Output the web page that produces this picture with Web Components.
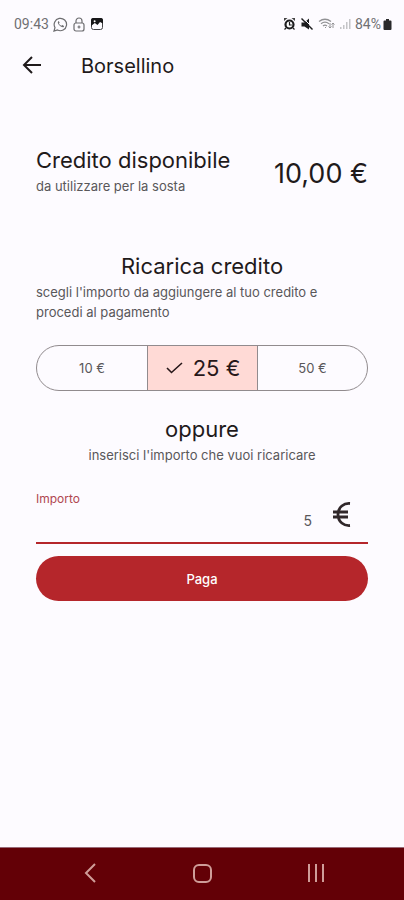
<!DOCTYPE html>
<html lang="it">
<head>
<meta charset="utf-8">
<meta name="viewport" content="width=device-width, initial-scale=1">
<title>Borsellino</title>
<style>
html, body { margin: 0; height: 100%; background: #fdfbff; }
body { font-family: Inter, "Open Sans", sans-serif; color: #1f1a1b; }
</style>
</head>
<body>
<wallet-screen></wallet-screen>
<script>
const define = (name, html, setup) => {
  const tpl = document.createElement('template');
  tpl.innerHTML = html;
  customElements.define(name, class extends HTMLElement {
    constructor() {
      super();
      this.attachShadow({ mode: 'open' }).append(tpl.content.cloneNode(true));
      if (setup) setup(this.shadowRoot);
    }
  });
};

define('status-bar', `
<style>
:host { display: flex; align-items: center; justify-content: space-between; height: 48px; padding: 0 12px 0 14px; font: 14px/16px Roboto, sans-serif; color: #707073; }
div { display: flex; align-items: center; gap: 4px; }
.battery { gap: 2px; }
svg { display: block; }
</style>
<div>
  <span>09:43</span>
  <svg width="15" height="15" viewBox="0 0 15 15" fill="none" stroke="#6d6d70" stroke-width="1.2"><path d="M1 14l1-3.4A6.2 6.2 0 1 1 4.500 13z"/><path d="M5.200 4.300c-1 1 0 3 1.400 4.300s3.300 2.400 4.200 1.300l.2-.9-1.700-1-.9.800C7 8.300 6.200 7.300 5.900 6.600l.7-.9-.7-1.500z" fill="#6d6d70" stroke="none"/></svg>
  <svg width="14" height="15" viewBox="-1 0 14 15" fill="none" stroke="#6d6d70" stroke-width="1.2"><rect x="1" y="6" width="10" height="8" rx="2"/><path d="M3 6V4a3 3 0 0 1 6 0v2M6 8.500v3M4.500 10h3"/></svg>
  <svg width="14" height="14" viewBox="0 0 14 14"><rect x="1.500" y="1.500" width="11" height="11" rx="2" fill="none" stroke="#444447"/><path d="M1 3q0-2 2-2h8q2 0 2 2v3.500L10 5 7.500 8 4.800 6 1 9z" fill="#171719"/><circle cx="4.600" cy="4.200" r="1" fill="#fff"/></svg>
</div>
<div>
  <svg width="13" height="14" viewBox="0 0 13 14"><path d="M1 1h3.500L1 4zM12 1H8.500L12 4z" fill="#444"/><circle cx="6.500" cy="7.500" r="4" fill="#fff" stroke="#1d1d1f" stroke-width="2.200"/><path d="M6.500 5v3h2.300M3 11l-1.500 1.500M10 11l1.500 1.500" fill="none" stroke="#1d1d1f" stroke-width="1.200"/></svg>
  <svg width="14" height="14" viewBox="0 0 14 14"><path d="M1.500 5.500h3L9 1.500V12.500L4.500 9.500h-3z" fill="#1d1d1f"/><path d="M2.500 .5l11 11" stroke="#fdfbff" stroke-width="1"/><path d="M1.500 1.500L12.500 12.500" stroke="#1d1d1f" stroke-width="1.400"/></svg>
  <svg width="17" height="14" viewBox="0 0 17 14" fill="none" stroke="#929295" stroke-width="1.300"><path d="M1 4.500Q7 0 13 4.500M3 6.700q4-3 8 0M5 9q2-1.600 4 0"/><path d="M7 11l1-1M12 6v5m-1.500-1.500L12 11l1.500-1.500M15 11V6m-1.500 1.500L15 6l1.500 1.500" stroke-width="1"/></svg>
  <svg width="12" height="14" viewBox="0 0 12 14" fill="#c4c4c7"><path d="M1 10h1.500v2H1zM4 8h1.500v4H4zM7 5h1.500v7H7zM10 2h1.500v10H10z"/></svg>
  <div class="battery"><span>84%</span>
  <svg width="9" height="13" viewBox="0 0 9 13"><path d="M3 1h3v1.500h1.500q1 0 1 1V11q0 1-1 1h-6q-1 0-1-1V3.500q0-1 1-1H3z" fill="#29292b"/></svg></div>
</div>`);

define('app-bar', `
<style>
:host { display: flex; align-items: center; height: 36px; padding: 0 20px; gap: 37px; }
button { all: unset; width: 24px; height: 24px; cursor: pointer; }
svg { display: block; }
h1 { margin: 0; font-size: 20px; line-height: 28px; font-weight: 400; }
</style>
<button aria-label="Indietro"><svg width="24" height="24" viewBox="0 0 24 24" fill="none" stroke="#1f1a1b" stroke-width="2"><path d="M21 11H4M12 3l-8 8 8 8"/></svg></button>
<h1><slot></slot></h1>`);

define('section-title', `
<style>
:host { display: flex; flex-direction: column; gap: 2px; }
:host([center]) { text-align: center; }
h2 { margin: 0; font-size: 22px; line-height: 28px; font-weight: 400; }
:host([heading-center]) h2 { text-align: center; }
:host([heading-center]) p { padding-right: 24px; }
p { margin: 0; font-size: 13px; line-height: 20px; color: #59575a; }
</style>
<h2><slot></slot></h2><p><slot name="note"></slot></p>`);

define('credit-balance', `
<style>
:host { display: flex; align-items: start; justify-content: space-between; min-height: 55px; }
output { align-self: center; font-size: 27px; line-height: 32px; white-space: nowrap; }
</style>
<slot></slot><output><slot name="amount"></slot></output>`);

define('amount-picker', `
<style>
:host { display: block; }
fieldset { all: unset; display: grid; grid-template-columns: repeat(3, 1fr); box-sizing: border-box; width: 100%; height: 46px; border: 1px solid #918b8e; border-radius: 23px; overflow: hidden; }
label { position: relative; display: flex; align-items: center; justify-content: center; gap: 8px; font-size: 13px; color: #59575a; cursor: pointer; }
label + label { border-left: 1px solid #918b8e; }
input { position: absolute; inset: 0; margin: 0; opacity: 0; cursor: pointer; }
svg { display: none; }
label:has(:checked) { background: #ffdad6; color: #271719; font-size: 22px; }
label:has(:checked) svg { display: block; }
</style>
<fieldset aria-label="Importo della ricarica"></fieldset>`, root => {
  const set = root.querySelector('fieldset');
  [10, 25, 50].forEach(value => {
    const label = document.createElement('label');
    label.innerHTML = `<input type="radio" name="amount" value="${value}"><svg width="20" height="20" viewBox="0 0 20 20" fill="none" stroke="#271719" stroke-width="1.600"><path d="M2 10l4.500 4.500L17 5"/></svg><span>${value} €</span>`;
    label.querySelector('input').checked = value === 25;
    set.append(label);
  });
});

define('amount-field', `
<style>
:host { display: grid; grid-template-columns: 1fr auto; border-bottom: 2px solid #b5262b; padding-bottom: 8px; column-gap: 16px; }
label { font-size: 12px; line-height: 16px; color: #b04650; grid-column: 1; }
input { grid-column: 1; min-width: 0; width: 100%; box-sizing: border-box; border: 0; padding: 0; margin: 0; background: none; outline: 0; text-align: right; font: 14px/20px Inter, sans-serif; height: 27px; color: #59575a; }
svg { grid-column: 2; grid-row: 1 / 3; align-self: center; margin-right: 12px; display: block; }
</style>
<label for="amount">Importo</label>
<input id="amount" inputmode="decimal" value="5">
<svg width="28" height="30" viewBox="0 0 28 30" fill="none" stroke="#30272a" stroke-width="2.800"><path d="M22 5.500C16 5 10 9 10 16.500S16 28 22 27.500M5 14h15M5 19h15"/></svg>`);

define('pay-button', `
<style>
:host { display: block; }
button { display: block; width: 100%; height: 45px; border: 0; border-radius: 23px; background: #b5262b; color: #fff; font: 500 13px/20px Inter, sans-serif; cursor: pointer; }
</style>
<button><slot></slot></button>`);

define('system-nav', `
<style>
:host { display: flex; align-items: center; justify-content: space-between; height: 52px; padding: 0 76px; background: #630006; border-top: 1px solid #986a77; }
button { all: unset; width: 26px; height: 26px; cursor: pointer; }
svg { display: block; }
</style>
<button aria-label="Indietro"><svg width="26" height="26" viewBox="0 0 26 26" fill="none" stroke="#cf9d99" stroke-width="2"><path d="M19 3l-9 9 9 9"/></svg></button>
<button aria-label="Home"><svg width="26" height="26" viewBox="0 0 26 26" fill="none" stroke="#cf9d99" stroke-width="2"><rect x="5" y="4" width="17" height="17" rx="5"/></svg></button>
<button aria-label="Recenti"><svg width="26" height="26" viewBox="0 0 26 26" fill="none" stroke="#cf9d99" stroke-width="2"><path d="M7 3v18M14 3v18M21 3v18"/></svg></button>`);

define('wallet-screen', `
<style>
:host { display: flex; flex-direction: column; min-height: 100vh; }
main { flex: 1; display: flex; flex-direction: column; padding: 62px 36px 24px; }
.balance { margin-bottom: 51px; }
amount-picker { margin: 23px 0 24px; }
amount-field { margin: 26px 0 12px; }
</style>
<status-bar></status-bar>
<app-bar>Borsellino</app-bar>
<main>
  <credit-balance class="balance"><section-title>Credito disponibile<span slot="note">da utilizzare per la sosta</span></section-title><span slot="amount">10,00 €</span></credit-balance>
  <section-title heading-center>Ricarica credito<span slot="note">scegli l'importo da aggiungere al tuo credito e procedi al pagamento</span></section-title>
  <amount-picker></amount-picker>
  <section-title center>oppure<span slot="note">inserisci l'importo che vuoi ricaricare</span></section-title>
  <amount-field></amount-field>
  <pay-button>Paga</pay-button>
</main>
<system-nav></system-nav>`);
</script>
</body>
</html>
